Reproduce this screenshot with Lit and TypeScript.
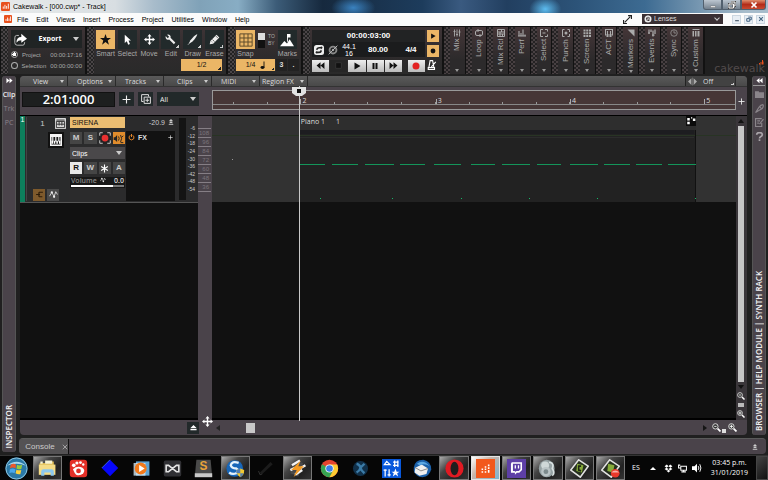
import { LitElement, html, svg, css, nothing } from "lit";
import type { SVGTemplateResult } from "lit";
import { customElement } from "lit/decorators.js";
import { classMap } from "lit/directives/class-map.js";

/* Glyphs are drawn on a 16 x 16 canvas unless stated otherwise. */
const GLYPHS: Record<string, SVGTemplateResult> = {
  brand: svg`<rect width="16" height="16" rx="2" fill="#e8501c"/><path d="M4 12V8M7 12V5M10 12V7M13 12V3" stroke="#fff" stroke-width="1.6"/>`,
  export: svg`<path d="M6 3H3Q1 3 1 6V12Q1 15 4 15H11Q13 15 13 12V11" fill="none" stroke="#bbb" stroke-width="1.2"/><path d="M3 12Q3 5 9 5V1L16 7L9 12V9Q5 9 3 12Z" fill="#fff"/>`,
  star: svg`<path d="M8 0L10 5.800H16L11.200 9.400L13 15.500L8 11.800L3 15.500L4.800 9.400L0 5.800H6Z" fill="#111"/>`,
  cursor: svg`<path d="M4 1V13L7 10.500L9 15.500L11.500 14.500L9.500 9.500H13Z" fill="#fff"/>`,
  move: svg`<path d="M8 0L11 3.500H9V7H12.500V5L16 8L12.500 11V9H9V12.500H11L8 16L5 12.500H7V9H3.500V11L0 8L3.500 5V7H7V3.500H5Z" fill="#fff"/>`,
  wrench: svg`<path d="M1 3L4 6L6 4L3 1Q7 0 8 3Q8.500 4.500 8 5.500L15 12.500L13 15L6 8Q3 9 1.500 7Q.5 5 1 3Z" fill="#eee"/>`,
  draw: svg`<path d="M15 0Q10 2 5 9L2 15L8 11Q14 5 15 0Z" fill="#eee"/><path d="M2 15L1 16" stroke="#eee"/>`,
  erase: svg`<path d="M11 1L15 5L6 14L1 15L2 10Z" fill="#eee"/><path d="M5 8L8 11M4 11L5 12M10 3L13 6" stroke="#333" stroke-width="1"/>`,
  grid: svg`<path d="M1 1H15V15H1ZM1 5.700H15M1 10.300H15M5.700 1V15M10.300 1V15" fill="none" stroke="#5d492a" stroke-width="1.1"/>`,
  quarter: svg`<ellipse cx="7" cy="13" rx="4" ry="2.800" fill="#111"/><path d="M10 13V1" stroke="#111" stroke-width="1.800"/>`,
  marks: svg`<path d="M0 15L5 9L8 12L11 7L16 15ZM8 1H12V5H9V10H8Z" fill="#fff"/>`,
  cycle: svg`<rect x="0" y="0" width="16" height="16" rx="4" fill="#eee"/><path d="M3 7Q4 3 8 3H11V1.500L14 4.500L11 7V5.500H8Q6 5.500 5.500 8M13 9Q12 13 8 13H5V14.500L2 11.500L5 9V10.500H8Q10 10.500 10.500 8" fill="#222"/>`,
  punchoff: svg`<circle cx="8" cy="8" r="5.500" fill="none" stroke="#888" stroke-width="3"/><circle cx="8" cy="8" r="2" fill="#999"/><path d="M1 15L15 1" stroke="#bbb" stroke-width="1.500"/>`,
  rewind: svg`<path d="M8 2V14L1 8ZM15 2V14L8 8Z" fill="#111"/>`,
  stop: svg`<path d="M3 3H13V13H3Z" fill="#111" stroke="#444"/>`,
  play: svg`<path d="M3 1L15 8L3 15Z" fill="#111"/>`,
  pause: svg`<path d="M3 2H7V14H3ZM9 2H13V14H9Z" fill="#111"/>`,
  forward: svg`<path d="M1 2V14L8 8ZM8 2V14L15 8Z" fill="#111"/>`,
  record: svg`<circle cx="8" cy="8" r="7" fill="#e32222"/>`,
  dot: svg`<circle cx="8" cy="8" r="6.500" fill="#111"/>`,
  metronome: svg`<path d="M5 1H9L11 12H3ZM2 12H12V15H2ZM7 11L14 3" fill="none" stroke="#fff" stroke-width="1.800"/>`,
  mix: svg`<path d="M3 1V15M8 1V15M13 1V15M1 5H5M6 11H10M11 6H15" stroke="#aaa" stroke-width="1.800"/>`,
  loop: svg`<path d="M5 3H13Q15 3 15 6V10Q15 13 12 13H4Q1 13 1 10V6Q1 3 5 3M6 0V6M10 10V16" fill="none" stroke="#aaa" stroke-width="2"/>`,
  mixrd: svg`<path d="M1 1H15V15H1ZM1 6H15M1 10H15M9 1V6M6 6V15M11 10V15" fill="none" stroke="#aaa" stroke-width="2"/>`,
  perf: svg`<path d="M2 15V4M6 15V8M10 15V1M14 15V11M0 14H16" stroke="#aaa" stroke-width="2.200"/>`,
  select: svg`<path d="M6 1H1V15H6M10 1H15V5M15 11V15H10M5 8H11" fill="none" stroke="#aaa" stroke-width="2"/>`,
  punch: svg`<path d="M5 1H1V15H5M11 1H15V6M15 10V15H11" fill="none" stroke="#aaa" stroke-width="2"/><circle cx="8" cy="8" r="3" fill="#aaa"/>`,
  screen: svg`<path d="M1 1H5V5H1ZM6.500 1H10.500V5H6.500ZM12 1H16V5H12ZM1 6.500H5V10.500H1ZM6.500 6.500H10.500V10.500H6.500ZM12 6.500H16V10.500H12ZM1 12H5V16H1ZM6.500 12H10.500V16H6.500ZM12 12H16V16H12Z" fill="#aaa"/>`,
  act: svg`<path d="M1 1H15V12H1ZM5 4V15M11 4V15M3 15H7M9 15H13" fill="none" stroke="#aaa" stroke-width="2.200"/>`,
  markers: svg`<path d="M1 1H15V15Z" fill="#aaa"/>`,
  events: svg`<path d="M2 1V9M6 1V6M10 3V15M14 1V10M0 8H4M8 12H13" stroke="#aaa" stroke-width="2.500"/>`,
  sync: svg`<circle cx="8" cy="8" r="6.500" fill="none" stroke="#999" stroke-width="1.600"/><path d="M8 3V8H12" fill="none" stroke="#999" stroke-width="1.500"/>`,
  custom: svg`<path d="M1 4H4V15H1ZM6 4H9V15H6ZM11 4H15V15H11ZM1 0H15V2H1Z" fill="#aaa"/>`,
  expand: svg`<path d="M3 13L13 3M9 1H15V7M1 9V15H7" fill="none" stroke="#222" stroke-width="2"/>`,
  lens: svg`<circle cx="8" cy="8" r="7" fill="#eee"/><path d="M8 3L12 6L10.500 12H5.500L4 6Z" fill="#3a3034"/><path d="M8 8L8 1M8 8L14 8M8 8L4 14" stroke="#eee" stroke-width="1.500"/>`,
  plus: svg`<path d="M8 1V15M1 8H15" stroke="#eee" stroke-width="2"/>`,
  duplicate: svg`<path d="M5 5H15V15H5ZM4 12H1V1H12V4M10 7V13M7 10H13" fill="none" stroke="#ddd" stroke-width="1.600"/>`,
  fastright: svg`<path d="M1 2V14L8 8ZM8 2V14L15 8Z" fill="#fff"/>`,
  fastleft: svg`<path d="M8 2V14L1 8ZM15 2V14L8 8Z" fill="#fff"/>`,
  trackview: svg`<rect width="16" height="16" rx="1" fill="#d8d8d8"/><path d="M2 5H14V14H2ZM2 3H14M6 5V11M10 5V11M2 9H14" fill="none" stroke="#333" stroke-width="1.400"/>`,
  piano: svg`<rect width="16" height="16" fill="#f4f4f4"/><path d="M2 4H14V14H2Z" fill="#1c1c1c"/><path d="M2 9H4V13H2ZM5 9H7V13H5ZM8.500 9H10.500V13H8.500ZM12 9H14V13H12ZM3 4H4.500V10H3ZM7 4H8.500V10H7ZM11 4H12.500V10H11Z" fill="#fff"/>`,
  arm: svg`<path d="M1 5V1H5M11 1H15V5M15 11V15H11M5 15H1V11" fill="none" stroke="#ddd" stroke-width="1.200"/><circle cx="8" cy="8" r="4.500" fill="#e83030"/>`,
  echo: svg`<path d="M1 6H3L6 3V13L3 10H1Z" fill="#222"/><path d="M8 5Q10 8 8 11M11 3Q14 8 11 13M13 6L15 4M11 14L15 14" fill="none" stroke="#222" stroke-width="1.400"/>`,
  asterisk: svg`<path d="M8 1V15M2 4.500L14 11.500M14 4.500L2 11.500" stroke="#fff" stroke-width="2"/>`,
  wave: svg`<path d="M1 11L5 4L9 12L12 3L15 8" fill="none" stroke="#ddd" stroke-width="1.600"/><circle cx="5" cy="4" r="2" fill="#eee"/><circle cx="9" cy="12" r="2" fill="#eee"/>`,
  lanes: svg`<path d="M2 8H9M7 4H14M7 12H13M7 4V12" stroke="#2c1c08" stroke-width="2.200"/>`,
  power: svg`<path d="M5 3Q1 6 3 11Q8 16 13 11Q15 6 11 3M8 0V7" fill="none" stroke="#ec8a2a" stroke-width="2.200"/>`,
  peak: svg`<path d="M8 0L14 6H2ZM8 6L14 11H2ZM2 13H14V15H2Z" fill="#ccc"/>`,
  eject: svg`<path d="M8 2L15 9H1ZM1 11H15V14H1Z" fill="#fff"/>`,
  zoomout: svg`<circle cx="6" cy="6" r="4.800" fill="#333" stroke="#ddd" stroke-width="1.700"/><path d="M10 10L15 15" stroke="#fff" stroke-width="3"/><path d="M4 6H8" stroke="#fff" stroke-width="1.500"/>`,
  zoomin: svg`<circle cx="6" cy="6" r="4.800" fill="#333" stroke="#ddd" stroke-width="1.700"/><path d="M10 10L15 15" stroke="#fff" stroke-width="3"/><path d="M3 6H9M6 3V9" stroke="#fff" stroke-width="1.600"/>`,
  automute: svg`<path d="M6 2V14L0 8ZM10 2V14L16 8Z" fill="#aaa"/><path d="M8 1V15" stroke="#888"/>`,
  folder: svg`<path d="M0 2H7V4H16V14H0Z" fill="#8a858a"/>`,
  plug: svg`<path d="M1 15L7 6Q10 1 14 1Q16 3 13 8L6 12ZM9 5L12 9" fill="none" stroke="#8a858a" stroke-width="2"/>`,
  note: svg`<path d="M12 1H1V15H12V9M4 5H9M4 9H7M8 11L15 2" fill="none" stroke="#8a858a" stroke-width="2"/>`,
  help: svg`<path d="M3 5Q3 1 8 1Q13 1 13 5Q13 7 10 8.500Q8 9.500 8 11.500" fill="none" stroke="#aaa5aa" stroke-width="3"/><path d="M6.500 13H9.500V16H6.500Z" fill="#aaa5aa"/>`,
  clipmenu: svg`<rect width="16" height="16" fill="#0c0c0c"/><path d="M2 3H6V7H2ZM2 9H6V13H2ZM8 2H10V4H8ZM11 4H15V8H11Z" fill="#fff"/>`,
  minimize: svg`<path d="M3 10H13V13H3Z" fill="#fff" stroke="#555" stroke-width=".8"/>`,
  restore: svg`<path d="M6 2H14V10H11M2 6H11V14H2Z" fill="none" stroke="#444" stroke-width="4"/><path d="M6 2H14V10H11M2 6H11V14H2Z" fill="none" stroke="#fff" stroke-width="2"/>`,
  close: svg`<path d="M3 3L13 13M13 3L3 13" stroke="#fff" stroke-width="3.400"/>`,
  docmin: svg`<path d="M3 11H13V14H3Z" fill="#456"/>`,
  docrestore: svg`<path d="M6 3H14V10H11M2 7H10V14H2Z" fill="none" stroke="#36597a" stroke-width="2.500"/>`,
  docclose: svg`<path d="M3 3L13 13M13 3L3 13" stroke="#456580" stroke-width="3"/>`,
  tabclose: svg`<path d="M2 2L14 14M14 2L2 14" stroke="#bbb" stroke-width="2"/>`,
  /* taskbar, 24 x 24 */
  windows: svg`<circle cx="12" cy="12" r="11.500" fill="#2a78a6"/><circle cx="12" cy="12" r="11" fill="none" stroke="#8fc4de" stroke-width="1"/><path d="M2 9Q12 1 22 9Q12 5 2 9Z" fill="#a8d6ea"/><path d="M6 8Q9 6 11.500 8L11 12Q8 10 5 12Z" fill="#f0582a"/><path d="M12.500 8Q15 9.500 18 8L17 12.500Q15 13.500 12 12Z" fill="#9acb3a"/><path d="M5 13Q8 11 11 13L10 17Q7 15.500 4.500 17Z" fill="#48a7ec"/><path d="M12 13Q14 14.500 17 13.500L16 18Q13 18.500 11 17Z" fill="#fbd03a"/>`,
  explorer: svg`<path d="M2 5H9L11 3H20V8H2Z" fill="#d9b54c"/><path d="M1 7H22V20H1Z" fill="#f5dc86"/><path d="M3 3H6V6H3ZM9 2H18V6H9Z" fill="#f7f3d4"/><path d="M4 16Q4 13 7 13H17Q20 13 20 16V21H16V17H8V21H4Z" fill="#8cc8ee"/>`,
  gom: svg`<rect x="1" y="1" width="22" height="22" rx="4" fill="#e53028"/><path d="M5 13Q10 8 17 11Q21 14 18 18Q14 22 9 20Q7 18 5 13Z" fill="#fff"/><circle cx="6" cy="8" r="2.300" fill="#fff"/><circle cx="10" cy="5" r="2" fill="#fff"/><circle cx="14.500" cy="4.500" r="1.800" fill="#fff"/><circle cx="18" cy="7" r="1.500" fill="#fff"/><circle cx="12" cy="15" r="3" fill="#e53028"/>`,
  diamond: svg`<path d="M12 1L23 12L12 23L1 12Z" fill="#0606fa"/><path d="M1 12L12 1" stroke="#4878f8" stroke-width="1"/>`,
  media: svg`<path d="M5 3H22V21H5Z" fill="#5ea4d4"/><path d="M2 5H17V21H2Z" fill="#d4e9f4" opacity=".8"/><circle cx="11" cy="12" r="7.500" fill="#f27a1c"/><path d="M9 7.500L16 12L9 16.500Z" fill="#fff"/>`,
  infinity: svg`<rect x="1" y="2" width="22" height="20" rx="2" fill="#303034"/><path d="M4 8H7L17 16H20V8H17L7 16H4Z" fill="none" stroke="#e4e4e4" stroke-width="2"/>`,
  sublime: svg`<path d="M3 1H21L23 22H1Z" fill="#4a4a4a"/><path d="M1 18H23V23H1Z" fill="#c9c9c9"/><text x="12" y="14" font-size="15" font-weight="700" text-anchor="middle" fill="#e9a23a" font-family="Liberation Sans, sans-serif">S</text>`,
  orb: svg`<circle cx="11" cy="12" r="10.500" fill="#1766b8"/><path d="M16 5Q7 2 6 8Q7 12 13 12Q17 14 13 18Q8 20 4 17" fill="none" stroke="#e6f2fb" stroke-width="3"/><path d="M13 14L18 12L23 14Q23 21 18 23Q13 20 13 14Z" fill="#f2c832"/><path d="M18 12V18H13V14ZM18 18H22Q21 22 18 23Z" fill="#2a6ad0" opacity=".8"/>`,
  pen: svg`<path d="M3 19L18 4L21 7L7 20Z" fill="#1c1c1c"/><path d="M2 16L4 21L7 20" fill="none" stroke="#3c3c3c"/>`,
  winamp: svg`<path d="M9 2L19 5L13 22L3 18Z" fill="#4a4a4a"/><path d="M5 8L15 2M3 14L9 11M15 12L22 8M9 20L18 14" stroke="#f3f3f3" stroke-width="3"/><path d="M16 2L4 14H11L7 23L20 9H13Z" fill="#f39a22"/>`,
  chrome: svg`<circle cx="12" cy="12" r="11" fill="#e4432f"/><path d="M12 12L2.500 6.500Q-1 14 4 19.500Q8 23 12 23L17 14Z" fill="#36a452"/><path d="M12 7H21.800Q25 16 18 21Q15 23 12 23L17 14Z" fill="#fccc32"/><circle cx="12" cy="12" r="5.200" fill="#fff"/><circle cx="12" cy="12" r="4.200" fill="#3b7de8"/>`,
  xbmc: svg`<circle cx="12" cy="12" r="9.500" fill="#10304a"/><path d="M7 6Q11 7 12 11Q13 15 17 18M17 6L12 11Q11 15 7 17" fill="none" stroke="#3c7ca8" stroke-width="3"/>`,
  tools: svg`<rect width="24" height="24" fill="#0858dc"/><path d="M3 7H10L6 3ZM14 4H21M14 8H21M16 2V10M20 2V10M4 13V22M9 13V22M2 14H6M7 20H11" stroke="#fff" stroke-width="1.600" fill="none"/><path d="M17 12L18.500 16H22L19.200 18L20.300 22L17 19.500L13.700 22L14.800 18L12 16H15.500Z" fill="#fff"/>`,
  mail: svg`<path d="M1 11Q2 1 13 1Q23 3 23 13Q21 22 12 23Q3 22 1 15Z" fill="#1c61aa"/><path d="M3 11L11 7L19 12L17 19L8 21L2 17Z" fill="#f0f0f0"/><path d="M3 11L10 15L19 12" fill="none" stroke="#888" stroke-width="1.200"/><path d="M5 6Q13 0 21 9Q15 5 8 8Z" fill="#5ba7e2"/>`,
  opera: svg`<ellipse cx="12" cy="12" rx="11.500" ry="11.500" fill="#e01a22"/><ellipse cx="12" cy="12" rx="5" ry="8.500" fill="#1e1e1e"/>`,
  cakewalk: svg`<rect width="24" height="24" fill="#f2581c"/><path d="M7 12H9V14H7ZM7 15.500H9V17.500H7ZM11 9H13V11H11ZM11 12H13V14H11ZM11 15.500H13V17.500H11ZM15 7H17V9H15ZM15 10.500H17V12.500H15ZM15 14H17V17.500H15Z" fill="#fff"/>`,
  twitch: svg`<rect width="24" height="24" fill="#5d3fa6"/><path d="M6 4H19V14L15.500 17.500H12.500L10 20V17.500H5V6Z" fill="#fff"/><path d="M7.500 6H17V13L15 15H12L10 16.500V15H7.500Z" fill="#5d3fa6"/><path d="M10.500 8V12M14.500 8V12" stroke="#fff" stroke-width="1.600"/>`,
  speakerpc: svg`<ellipse cx="11" cy="12" rx="10" ry="11" fill="#96a2a4"/><circle cx="9" cy="8" r="5" fill="#cfd8d8"/><circle cx="10" cy="16" r="6" fill="#bac4c6"/><circle cx="10" cy="16" r="3" fill="#7c8a8c"/><path d="M14 4Q21 5 18 12Q22 18 18 21" fill="none" stroke="#d9e2e2" stroke-width="2"/>`,
  camtasia: svg`<path d="M11 1L23 9L13 23L1 14Z" fill="#26301e" stroke="#e2e2e2" stroke-width="2"/><path d="M9 6L17 8L15 17L8 15Z" fill="#86ab3a"/><path d="M14 9L11 9V14L14 15" fill="none" stroke="#1e2616" stroke-width="2"/>`,
  recorder: svg`<path d="M11 1L23 9L13 23L1 14Z" fill="#26301e" stroke="#e2e2e2" stroke-width="2"/><path d="M9 6L17 8L15 17L8 15Z" fill="#86ab3a"/><circle cx="18" cy="18" r="5.500" fill="#e8382a"/><path d="M13 17Q18 12 23 17Z" fill="#f6b0a6"/>`,
  dropbox: svg`<path d="M5 1L8 4L4.500 6.500L1 4ZM11 1L15 4L11.500 6.500L8 4ZM1 9L4.500 6.500L8 9L5 11.500ZM15 9L11.500 6.500L8 9L11 11.500ZM8 10L11 12.500L8 15L5 12.500Z" fill="#fff"/>`,
  network: svg`<path d="M5 4H15V11H5ZM10 11V14M6 14H14M1 1V7H4M1 2H4" fill="none" stroke="#fff" stroke-width="1.800"/>`,
  sound: svg`<path d="M0 5H4L8 1V15L4 11H0Z" fill="#fff"/><path d="M10 5Q12 8 10 11M12.500 2Q16 8 12.500 14" fill="none" stroke="#fff" stroke-width="1.500"/>`,
  playhead: svg`<path d="M0 1H14V7L10 10H4L0 7Z" fill="#e2e2e2"/><path d="M5 3H9V7H5Z" fill="#111"/>`,
};

const glyph = (name: string, size: number, box = 16) =>
  html`<svg class="glyph" width=${size} height=${size} viewBox="0 0 ${box} ${box}" aria-hidden="true">${GLYPHS[name]}</svg>`;

const MENU = ["File", "Edit", "Views", "Insert", "Process", "Project", "Utilities", "Window", "Help"];

const TOOLS = [
  { id: "star", label: "Smart", active: true, more: false },
  { id: "cursor", label: "Select", active: false, more: false },
  { id: "move", label: "Move", active: false, more: false },
  { id: "wrench", label: "Edit", active: false, more: true },
  { id: "draw", label: "Draw", active: false, more: true },
  { id: "erase", label: "Erase", active: false, more: true },
];

const MODULES = [
  ["mix", "Mix"], ["loop", "Loop"], ["mixrd", "Mix Rcl"], ["perf", "Perf"],
  ["select", "Select"], ["punch", "Punch"], ["screen", "Screen"], ["act", "ACT"],
  ["markers", "Markers"], ["events", "Events"], ["sync", "Sync"], ["custom", "Custom"],
];

/* Timeline positions, in units of the visible span. */
const SPAN = 525;
const NOTES = [
  [88, 25], [120, 26], [153, 29], [188, 25], [222, 27], [259, 25],
  [291, 28], [326, 24], [359, 28], [393, 26], [425, 26], [457, 28],
];
const HITS = [108, 180, 249, 318, 386, 484];
const BARS = [[88, "2"], [224, "3"], [359, "4"], [494, "5"]] as const;
const BEATS = Array.from({ length: 15 }, (_, i) => 20 + (i * 406) / 12);

const TASKS = [
  ["explorer", "open"], ["gom", ""], ["diamond", ""], ["media", ""], ["infinity", ""],
  ["sublime", ""], ["orb", "open"], ["pen", ""], ["winamp", "open"], ["chrome", ""],
  ["xbmc", ""], ["tools", ""], ["mail", ""], ["opera", "open"], ["cakewalk", "current"],
  ["twitch", "open"], ["speakerpc", "open"], ["camtasia", "open"], ["recorder", "open"],
];

const base = css`
  * { box-sizing: border-box; }
  button, input, select {
    font: inherit; color: inherit; background: none; border: 0; border-radius: 0;
    margin: 0; padding: 0; min-width: 0; appearance: none; outline: none;
  }
  button { display: flex; align-items: center; justify-content: center; white-space: nowrap; }
  .glyph { display: block; flex: none; }
  .down { width: 0; height: 0; flex: none; border: 3px solid transparent; border-top: 4px solid #ccc; border-bottom: 0; }
  .down.small { border-width: 3px 2px 0; }
  .corner { position: absolute; right: 1px; bottom: 1px; width: 3px; height: 3px; background: linear-gradient(135deg, transparent 50%, #ccc 50%); }
`;

@customElement("window-chrome")
class WindowChrome extends LitElement {
  static styles = [base, css`
    :host { display: block; font: 7px/13px "Liberation Sans", Arial, sans-serif; color: #000; }
    .title {
      display: flex; align-items: center; height: 13px; padding-left: 1px; gap: 3px;
      background:
        radial-gradient(ellipse 22px 12px at 46% 60%, #3a82c0, transparent),
        radial-gradient(ellipse 16px 12px at 71% 70%, #5cbcf0, transparent),
        linear-gradient(90deg, #e8eaea 0, #d8dee2 15%, #a8bccb 20%, #80a2b8 26%, #88adc4 31%, #3c5c78 36%, #16293e 42%, #1d3c5c 55%, #3a5a80 60%, #223f60 66%, #2c5378 75%, #3d6b92 84%, #a7bccb 97%);
    }
    .name { flex: 1; text-shadow: 0 0 3px #fff; }
    .caption { display: flex; align-self: flex-start; margin-right: 2px; }
    .caption button { width: 19px; height: 10px; border: 1px solid #52606e; border-top: 0; background: linear-gradient(#bcc6d0, #74818e); }
    .caption button:first-child { border-bottom-left-radius: 3px; }
    .caption .x { width: 25px; background: linear-gradient(#e0906e, #b32c18 50%, #c84a30); border-bottom-right-radius: 3px; }
    .menu { display: flex; align-items: center; height: 13px; padding: 0 3px 1px 4px; background: #fbfbfb; }
    .items { display: flex; flex: 1; gap: 8px; padding-left: 5px; }
    .lenses { display: flex; align-items: center; width: 81px; height: 10px; margin: 0 9px 0 10px; background: #3a3034; color: #ddd; padding: 0 2px; gap: 2px; }
    .lenses select { flex: 1; line-height: 10px; height: 10px; }
    .doc { display: flex; gap: 3px; }
    .doc button { width: 9px; height: 9px; background: #e8eef4; border: 1px solid #cbd6e0; }
    .tick { width: 4px; height: 4px; border: solid #ccc; border-width: 0 1px 1px 0; transform: rotate(45deg); margin: 0 2px 2px 0; }
  `];
  render() {
    return html`
      <header class="title">
        ${glyph("brand", 9)}
        <span class="name">Cakewalk - [000.cwp* - Track]</span>
        <span class="caption">
          <button aria-label="Minimize">${glyph("minimize", 8)}</button>
          <button aria-label="Restore">${glyph("restore", 8)}</button>
          <button class="x" aria-label="Close">${glyph("close", 8)}</button>
        </span>
      </header>
      <nav class="menu">
        ${glyph("brand", 8)}
        <span class="items">${MENU.map((m) => html`<button>${m}</button>`)}</span>
        ${glyph("expand", 9)}
        <label class="lenses">${glyph("lens", 8)}
          <select aria-label="Lenses"><option>Lenses</option></select><i class="tick"></i>
        </label>
        <span class="doc">
          <button aria-label="Minimize document">${glyph("docmin", 6)}</button>
          <button aria-label="Restore document">${glyph("docrestore", 6)}</button>
          <button aria-label="Close document">${glyph("docclose", 6)}</button>
        </span>
      </nav>`;
  }
}

@customElement("control-bar")
class ControlBar extends LitElement {
  static styles = [base, css`
    :host { display: flex; gap: 2px; height: 48px; padding: 1px 0 0 1px; background: #121212; color: #aaa; font: 7px/8px "Liberation Sans", Arial, sans-serif; }
    .module { position: relative; flex: none; display: flex; background: linear-gradient(#3e3436, #2e2b2c 60%, #2a2a2a); }
    .grip { width: 7px; flex: none; background: conic-gradient(#4a4547 25%, #222 0 50%, #4a4547 0 75%, #222 0) 0 0 / 4px 4px; }
    .export { width: 84px; }
    .body { flex: 1; min-width: 0; padding: 3px; }
    .exportbtn { width: 100%; height: 18px; background: #202424; color: #fff; font: bold 7px/18px "Open Sans", sans-serif; justify-content: space-between; padding: 0 3px; }
    .choice { display: flex; align-items: center; height: 9px; margin-top: 2px; gap: 4px; font-size: 6px; }
    .choice input { width: 7px; height: 7px; border: 1px solid #aaa; border-radius: 50%; }
    .choice input:checked { background: radial-gradient(#fff 2px, transparent 2px); }
    .choice span { flex: 1; }
    .tools { width: 139px; }
    .tools .body { padding: 3px 2px; }
    .row { display: flex; justify-content: space-between; }
    .tool { display: flex; flex-direction: column; align-items: center; width: 19px; }
    .tool i { position: relative; display: flex; align-items: center; justify-content: center; width: 19px; height: 19px; background: #222a2b; margin-bottom: 1px; }
    .tool.active i, .gold { background: #ebb666; color: #111; }
    .gold { position: relative; display: flex; align-items: center; justify-content: center; height: 12px; }
    .gold select { flex: 1; height: 100%; text-align: center; text-align-last: center; }
    .gold .corner { background: linear-gradient(135deg, transparent 50%, #222 50%); }
    .res { width: 41px; margin: 1px 2px 0 auto; }
    .snap { width: 73px; }
    .snap .body { padding: 3px 1px; }
    .switch { display: flex; gap: 3px; font-size: 5px; line-height: 7px; padding-top: 3px; }
    .switch i { width: 7px; height: 15px; background: linear-gradient(#ddd 45%, #111 45%); }
    .snap .row { justify-content: flex-start; gap: 3px; }
    .snap .row.second { gap: 1px; margin-top: 1px; }
    .value { width: 39px; padding: 0 8px 0 6px; }
    .mini { width: 11px; height: 12px; background: #222; color: #ddd; font-weight: bold; }
    .transport { width: 139px; color: #fff; }
    .transport .body { display: grid; grid-template-columns: 1fr 12px; gap: 2px; padding: 3px 3px 2px 2px; }
    .lcd { background: #1b1c1d; font: bold 8px/12px "Liberation Sans", sans-serif; height: 27px; }
    .lcd .time { text-align: center; height: 12px; background: #222324; margin-bottom: 1px; }
    .lcd .info { display: grid; grid-template-columns: 14px 13px 20px 38px 1fr; align-items: center; height: 14px; }
    .info > * { justify-self: center; }
    .rate { font-size: 7px; line-height: 7px; text-align: center; font-weight: normal; }
    .side { display: flex; flex-direction: column; gap: 3px; }
    .side .gold { width: 12px; height: 12px; }
    .keys { display: flex; gap: 1px; }
    .keys button { position: relative; flex: 1; height: 12px; background: linear-gradient(#eee, #bbb); }
    .keys .off { background: #262626; }
    .keys .rec { margin-left: 5px; }
    .strips { flex: 1 1 258px; max-width: 259px; display: flex; gap: 1px; }
    .strip { flex: 1; height: auto; position: relative; flex-direction: column; justify-content: flex-start; align-items: center; padding: 2px 0 2px 6px; gap: 2px; color: #aaa; font-size: 8px; line-height: 10px;
      background: conic-gradient(#484042 25%, #242223 0 50%, #484042 0 75%, #242223 0) 0 0 / 4px 4px; }
    .strip::before { content: ""; position: absolute; inset: 0 0 0 6px; background: linear-gradient(#453638, #2c2a2b 70%); }
    .strip > * { position: relative; }
    .strip span { writing-mode: vertical-rl; transform: rotate(180deg); flex: 1; text-align: right; }
    .strip .down { border-top-color: #999; }
    .brand { flex: 1 0 60px; display: flex; align-items: flex-end; justify-content: flex-end; padding: 0 3px 0 0; background: #202020; color: #514a4b; font: 11px/10px "DejaVu Sans", sans-serif; position: relative; }
    .brand svg { position: absolute; right: 4px; bottom: 9px; }
  `];
  render() {
    return html`
      <section class="module export"><i class="grip"></i><div class="body">
        <button class="exportbtn">${glyph("export", 13)}<span>Export</span><i class="down"></i></button>
        <label class="choice"><input type="radio" name="range" checked><span>Project</span><time>00:00:17:16</time></label>
        <label class="choice"><input type="radio" name="range"><span>Selection</span><time>00:00:00:00</time></label>
      </div></section>

      <section class="module tools"><i class="grip"></i><div class="body">
        <div class="row">${TOOLS.map((t) => html`
          <button class=${classMap({ tool: true, active: t.active })}>
            <i>${glyph(t.id, 11)}${t.more ? html`<b class="corner"></b>` : nothing}</i>${t.label}
          </button>`)}</div>
        <div class="gold res"><select aria-label="Draw resolution"><option>1/2</option></select><b class="corner"></b></div>
      </div></section>

      <section class="module snap"><i class="grip"></i><div class="body">
        <div class="row">
          <button class="tool active"><i>${glyph("grid", 14)}</i>Snap</button>
          <span class="switch"><i></i><span>TO<br>BY</span></span>
          <button class="tool"><i>${glyph("marks", 14)}</i>Marks</button>
        </div>
        <div class="row second">
          <div class="gold value"><select aria-label="Snap value"><option>1/4</option></select>${glyph("quarter", 8)}<b class="corner"></b></div>
          <button class="mini">3</button><button class="mini">.</button>
        </div>
      </div></section>

      <section class="module transport"><i class="grip"></i><div class="body">
        <div class="lcd">
          <div class="time">00:00:03:00</div>
          <div class="info">${glyph("cycle", 10)}${glyph("punchoff", 10)}<span class="rate">44.1<br>16</span><span>80.00</span><span>4/4</span></div>
        </div>
        <div class="side">
          <button class="gold" aria-label="Auto play">${glyph("play", 6)}</button>
          <button class="gold" aria-label="Auto record">${glyph("dot", 6)}</button>
        </div>
        <div class="keys">
          <button aria-label="Rewind">${glyph("rewind", 9)}</button>
          <button class="off" aria-label="Stop">${glyph("stop", 9)}</button>
          <button aria-label="Play">${glyph("play", 8)}</button>
          <button aria-label="Pause">${glyph("pause", 8)}</button>
          <button aria-label="Forward">${glyph("forward", 9)}</button>
          <button class="rec" aria-label="Record">${glyph("record", 8)}</button>
        </div>
        ${glyph("metronome", 10)}
      </div></section>

      <div class="strips">${MODULES.map(([id, label]) => html`
        <button class="strip">${glyph(id, 8)}<span>${label}</span><i class="down small"></i></button>`)}
      </div>
      <div class="brand">cakewalk
        <svg width="5" height="5" viewBox="0 0 10 10" aria-hidden="true"><path d="M0 9V6H2V9ZM3 9V4H5V9ZM6 9V0H8V9ZM9 9V3H10V9Z" fill="#e8501c"/></svg>
      </div>`;
  }
}

@customElement("track-pane")
class TrackPane extends LitElement {
  static styles = [base, css`
    :host { display: grid; grid-template-columns: 5px 43px 55px 49px 10px 1fr; column-gap: 1px; height: 87px; padding: 1px 0; background: #2b2b2c; color: #ccc; border-bottom: 1px solid #555; font: 7px/9px "Liberation Sans", Arial, sans-serif; }
    .color { background: #0d7f5c; margin: -1px 0; text-align: center; color: #fff; line-height: 8px; }
    .id { display: grid; grid-template: 13px 1fr 13px / 1fr 17px; align-items: center; justify-items: center; padding: 0 0 0 6px; border-left: 1px solid #444; background: #2a2b2c; }
    .id .big { align-self: start; grid-column: 2; background: #111; padding: 2px; margin: 2px 0 0 -9px; }
    .num { font-size: 8px; }
    .foot { grid-column: 1 / 3; justify-self: start; display: flex; gap: 2px; }
    .foot button { width: 12px; height: 12px; background: #4a4a4a; }
    .foot .brown { background: #7e5a2c; }
    .controls { display: flex; flex-direction: column; gap: 3px; }
    .name { height: 11px; width: 100%; background: #ebbd72; color: #111; padding: 0 2px; margin-bottom: 1px; }
    .four { display: grid; grid-template-columns: repeat(4, 1fr); gap: 2px; }
    .four button { height: 12px; background: #454545; font: bold 8px/12px "Liberation Sans", sans-serif; }
    .four .rec { background: #222; }
    .four .echo { background: #e08c2c; }
    .four .on { background: #e8e8e8; color: #111; }
    .combo { display: flex; align-items: center; height: 12px; background: #4a484a; padding: 0 3px 0 2px; color: #fff; font-size: 7px; }
    .combo select { flex: 1; height: 12px; }
    .volume { display: grid; grid-template-columns: 1fr auto; font: 600 7px/7px "Open Sans", sans-serif; color: #888; height: 11px; background: #181818; padding: 0 1px; }
    .volume .caption { display: flex; gap: 3px; }
    .volume b { color: #ddd; font-weight: 600; }
    .volume input { grid-column: 1 / 3; height: 2px; width: 100%; background: linear-gradient(90deg, #fff 80%, #777 80%); }
    .volume input::-webkit-slider-thumb { appearance: none; width: 0; }
    .fx { display: flex; flex-direction: column; }
    .peak { display: flex; align-items: center; justify-content: flex-end; gap: 3px; height: 14px; padding: 0 1px 4px 0; }
    .bin { flex: 1; background: #121212; padding: 2px; }
    .bin div { display: flex; align-items: center; gap: 3px; font-weight: bold; color: #ddd; height: 8px; }
    .bin .add { margin-left: auto; }
    .meter { background: #141414; margin: 1px 0 1px 3px; }
    .scale { display: flex; flex-direction: column; justify-content: space-between; text-align: right; font-size: 5px; line-height: 7px; color: #ccc; padding: 8px 3px 8px 0; }
  `];
  render() {
    return html`
      <span class="color">1</span>
      <div class="id">
        <span class="num">1</span>${glyph("trackview", 11)}
        <span class="big">${glyph("piano", 12)}</span>
        <div class="foot"><button class="brown" aria-label="Lanes">${glyph("lanes", 9)}</button><button aria-label="Automation">${glyph("wave", 9)}</button></div>
      </div>
      <div class="controls">
        <input class="name" aria-label="Track name" value="SIRENA">
        <div class="four">
          <button>M</button><button>S</button>
          <button class="rec" aria-label="Arm">${glyph("arm", 12)}</button>
          <button class="echo" aria-label="Input echo">${glyph("echo", 11)}</button>
        </div>
        <div class="combo"><select aria-label="Edit filter"><option>Clips</option></select><i class="down"></i></div>
        <div class="four">
          <button class="on">R</button><button>W</button>
          <button aria-label="Freeze">${glyph("asterisk", 9)}</button><button>A</button>
        </div>
        <label class="volume">
          <span class="caption">Volume ${glyph("wave", 6)}</span><b>0.0</b>
          <input type="range" aria-label="Volume" value="80">
        </label>
      </div>
      <div class="fx">
        <div class="peak">-20.9 ${glyph("peak", 6)}</div>
        <div class="bin"><div>${glyph("power", 7)}FX<span class="add">${glyph("plus", 5)}</span></div></div>
      </div>
      <span class="meter"></span>
      <div class="scale">${[-6, -12, -18, -24, -30, -36, -42, -48, -54].map((d) => html`<span>${d}</span>`)}</div>`;
  }
}

@customElement("clip-lane")
class ClipLane extends LitElement {
  static styles = [base, css`
    :host { display: block; position: relative; height: 86px; background: #323232; color: #ddd; font: 7px/11px "Open Sans", sans-serif; }
    .lane { display: block; width: 100%; height: 100%; }
    .head { position: absolute; top: 0; display: flex; gap: 11px; align-items: flex-start; }
    .head .glyph { margin-left: auto; }
  `];
  render() {
    const pct = (v: number) => `${(v / SPAN) * 100}%`;
    return html`
      <svg class="lane" viewBox="0 0 ${SPAN} 86" preserveAspectRatio="none" shape-rendering="crispEdges" aria-hidden="true">
        <rect x="88" y="0" width="397" height="86" fill="#222"/>
        <rect x="88" y="0" width="397" height="14" fill="#2e2e2e"/>
        <rect x="88" y="14" width="395" height="4" fill="#1d1d20"/>
        <rect x="88" y="21" width="395" height="1" fill="#2c2c2c"/>
        <rect x="0" y="19" width="525" height="1" fill="#283424"/>
        <rect x="484" y="14" width="1" height="72" fill="#111"/>
        ${NOTES.map(([x, w]) => svg`<rect x=${x} y="48" width=${w} height="1" fill="#14955a"/>`)}
        ${HITS.map((x) => svg`<rect x=${x} y="82" width="1" height="1" fill="#16b868"/>`)}
        <rect x="20" y="43" width="1" height="1" fill="#999"/>
      </svg>
      <div class="head" style="left:${pct(89)};width:${pct(396)}"><span>Piano 1</span><span>1</span>${glyph("clipmenu", 10)}</div>`;
  }
}

@customElement("track-view")
class TrackView extends LitElement {
  static styles = [base, css`
    :host { display: grid; grid-template: 12px 27px 1fr 15px / 178px 14px 1fr 11px; flex: 1; min-width: 0; position: relative; background: #4a434a; border-radius: 4px; overflow: hidden; font: 7px/11px "Open Sans", sans-serif; color: #ddd; }
    .menus { grid-area: 1 / 1 / 2 / 5; display: flex; height: 11px; background: linear-gradient(#5a5a5a, #494949); border-bottom: 1px solid #333; }
    .menus button { width: 48px; height: 10px; justify-content: space-between; padding: 0 3px 0 13px; border-right: 1px solid #2a2a2a; }
    .menus .tight { padding-left: 9px; }
    .menus .flush { padding-left: 2px; }
    .menus .automute { margin-left: auto; margin-right: 11px; width: 51px; background: #424242; border-left: 1px solid #222; justify-content: flex-start; gap: 6px; padding-left: 2px; position: relative; }
    .now { grid-area: 2 / 1 / 3 / 3; display: flex; align-items: center; gap: 4px; padding: 0 0 5px 2px; }
    .clock { width: 93px; height: 15px; background: #1d1f1f; border: 1px solid #111; color: #fff; text-align: center; font: 600 13px/13px "Open Sans", sans-serif; }
    .sq { width: 15px; height: 14px; background: #22292a; }
    .filter { display: flex; align-items: center; width: 42px; height: 14px; background: #22292a; padding: 0 3px; color: #eee; }
    .filter select { flex: 1; }
    .ruler { grid-area: 2 / 3 / 3 / 4; position: relative; height: 20px; margin-top: 2px; background: #463636; border: 1px solid #999; }
    .ruler svg { display: block; width: 100%; height: 18px; }
    .bar { position: absolute; top: 6px; line-height: 8px; padding-left: 2px; color: #ddd; }
    .addbar { grid-area: 2 / 4 / 3 / 5; align-self: center; width: 11px; height: 11px; }
    .pane { grid-area: 3 / 1 / 4 / 2; background: #111; border-top: 1px solid #000; border-bottom: 2px solid #000; }
    .keys { grid-area: 3 / 2 / 4 / 3; background: #4a434a; border-top: 1px solid #000; padding-top: 12px; font: 6px/8px "Liberation Sans", sans-serif; color: #7b747b; }
    .keys span { display: block; height: 9px; border-top: 1px solid #857e85; padding-right: 2px; text-align: right; width: 13px; }
    .clips { grid-area: 3 / 3 / 4 / 4; background: #111; border-top: 1px solid #000; border-bottom: 2px solid #000; }
    .vscroll { grid-area: 3 / 4 / 4 / 5; display: flex; flex-direction: column; align-items: center; padding: 3px 1px 2px 0; gap: 3px; background: #3a363a; border-top: 1px solid #000; }
    .vscroll .up { border: 3px solid transparent; border-bottom: 4px solid #111; border-top: 0; }
    .vscroll .thumb { width: 6px; flex: 1; background: #c6c6c6; }
    .vscroll .down { border-top-color: #111; }
    .vscroll .block { width: 6px; height: 4px; background: #bbb; }
    .hscroll { grid-area: 4 / 1 / 5 / 5; display: flex; align-items: center; padding: 0 10px 0 167px; gap: 0; }
    .hscroll .eject { width: 12px; height: 12px; background: #22292a; margin-right: 17px; }
    .hscroll .l { border: 3px solid transparent; border-right: 4px solid #222; border-left: 0; }
    .hscroll .thumb { width: 9px; height: 10px; background: #c8c8c8; margin-left: 26px; }
    .hscroll .r { border: 3px solid transparent; border-left: 4px solid #151515; border-right: 0; margin: 0 5px 0 auto; }
    .hscroll .knob { width: 4px; height: 4px; background: #ddd; margin: 6px 2px 0 1px; }
    .overlay { grid-area: 1 / 3 / 5 / 4; position: relative; pointer-events: none; }
    .playhead { position: absolute; top: 10px; bottom: 14px; width: 1px; background: #c8c8c8; }
    .playhead svg { position: absolute; left: -7px; top: 0; }
    .pointer { position: absolute; left: -10px; bottom: 8px; }
  `];
  render() {
    const pct = (v: number) => `${(v / SPAN) * 100}%`;
    const caret = html`<i class="down small"></i>`;
    return html`
      <nav class="menus">
        <button>View${caret}</button><button class="tight">Options${caret}</button>
        <button class="tight">Tracks${caret}</button><button>Clips${caret}</button>
        <button class="tight">MIDI${caret}</button><button class="flush">Region FX${caret}</button>
        <button class="automute">${glyph("automute", 9)}Off<b class="corner"></b></button>
      </nav>
      <div class="now">
        <output class="clock">2:01:000</output>
        <button class="sq" aria-label="Add track">${glyph("plus", 9)}</button>
        <button class="sq" aria-label="Duplicate">${glyph("duplicate", 10)}</button>
        <label class="filter"><select aria-label="Track filter"><option>All</option></select><i class="down"></i></label>
      </div>
      <div class="ruler">
        <svg viewBox="0 0 ${SPAN} 18" preserveAspectRatio="none" shape-rendering="crispEdges" aria-hidden="true">
          <path d="M0 13.500H525" stroke="#888"/>
          ${BEATS.map((x) => svg`<rect x=${Math.round(x)} y="11" width="1" height="2" fill="#999"/>`)}
          ${BARS.map(([x]) => svg`<rect x=${x} y="8" width="1" height="5" fill="#aaa"/>`)}
        </svg>
        ${BARS.map(([x, n]) => html`<span class="bar" style="left:${pct(x)}">${n}</span>`)}
      </div>
      <button class="addbar" aria-label="Add marker">${glyph("plus", 7)}</button>
      <div class="pane"><track-pane></track-pane></div>
      <div class="keys">${[108, 96, 84, 72, 60, 48, 36].map((k) => html`<span>${k}</span>`)}<span></span></div>
      <div class="clips"><clip-lane></clip-lane></div>
      <div class="vscroll">
        <i class="up"></i><i class="thumb"></i><i class="down"></i>
        ${glyph("zoomout", 8)}<i class="block"></i>${glyph("zoomin", 8)}
      </div>
      <div class="hscroll">
        <button class="eject" aria-label="Show buses">${glyph("eject", 7)}</button>
        <i class="l"></i><i class="thumb"></i><i class="r"></i>
        ${glyph("zoomout", 9)}<i class="knob"></i>${glyph("zoomin", 9)}
      </div>
      <div class="overlay">
        <div class="playhead" style="left:${pct(87)}">
          <svg width="14" height="10" viewBox="0 0 14 10" aria-hidden="true">${GLYPHS.playhead}</svg>
        </div>
        <svg class="pointer" width="11" height="11" viewBox="0 0 16 16" aria-hidden="true">${GLYPHS.move}</svg>
      </div>`;
  }
}

@customElement("task-bar")
class TaskBar extends LitElement {
  static styles = [base, css`
    :host { display: flex; align-items: stretch; height: 25px; background: #060606; border-top: 1px solid #333; color: #fff; font: 7px/10px "Open Sans", sans-serif; }
    .start { width: 32px; }
    .tasks { flex: 0 1 594px; display: flex; min-width: 0; }
    .task { flex: 1; margin: 0 1px; border: 1px solid transparent; }
    .open { background: linear-gradient(135deg, #aaa 0, #444 35%, #222 70%, #333); border-color: #777; }
    .current { background: linear-gradient(135deg, #fff, #c8b4a8 40%, #7cb4d4); border-color: #e4e4e4; }
    .tray { flex: 1; display: flex; align-items: center; justify-content: flex-end; gap: 5px; padding-left: 6px; }
    .lang { margin-right: auto; }
    .up { border: 3px solid transparent; border-bottom: 3px solid #fff; border-top: 0; margin-right: 3px; }
    .clock { text-align: center; margin: 0 3px 0 4px; }
    .desk { width: 12px; align-self: stretch; background: linear-gradient(135deg, #444, #111); border: 1px solid #444; }
  `];
  render() {
    return html`
      <button class="start" aria-label="Start">${glyph("windows", 23, 24)}</button>
      <div class="tasks">${TASKS.map(([id, state]) => html`
        <button class="task ${state}" aria-label=${id}>${glyph(id, id === "pen" || id === "diamond" ? 18 : 19, 24)}</button>`)}</div>
      <div class="tray">
        <span class="lang">ES</span><i class="up"></i>
        ${glyph("dropbox", 9)}${glyph("network", 9)}${glyph("sound", 10)}
        <time class="clock">03:45 p.m.<br>31/01/2019</time>
        <button class="desk" aria-label="Show desktop"></button>
      </div>`;
  }
}

@customElement("app-root")
class AppRoot extends LitElement {
  static styles = [base, css`
    :host { display: flex; flex-direction: column; height: 100vh; background: #202020; overflow: hidden; }
    .work { flex: 1; display: flex; gap: 4px; min-height: 0; padding: 2px 2px 3px; }
    .dock { width: 14px; flex: none; display: flex; flex-direction: column; align-items: center; background: #4a434a; border-radius: 3px; color: #8a838a; font: 7px/14px "Open Sans", sans-serif; border: 1px solid #555; border-width: 0 1px; }
    .dock .side { writing-mode: vertical-rl; transform: rotate(180deg); color: #f0f0f0; font: 600 8px/12px "Open Sans", sans-serif; margin-top: auto; white-space: nowrap; padding-top: 4px; }
    .left { margin-bottom: -17px; }
    .right { margin-left: 1px; }
    .dock .top { height: 10px; width: 100%; border-bottom: 1px solid #999; margin-bottom: 2px; }
    .left .top { border-bottom-color: transparent; }
    .dock .sel { color: #eee; font-weight: 600; }
    .icons { display: flex; flex-direction: column; gap: 5px; padding-top: 2px; }
    .console { display: flex; align-items: center; height: 16px; margin: 0 2px 1px 19px; background: #4a434a; border-radius: 4px; border-top: 1px solid #5a5a5a; color: #ccc; font: 8px/14px "Liberation Sans", sans-serif; }
    .tab { display: flex; align-items: center; gap: 7px; height: 100%; width: 50px; padding-left: 6px; background: #545254; border-right: 1px solid #111; border-radius: 4px 0 0 4px; }
    .console .end { margin-left: auto; padding-right: 8px; }
  `];
  render() {
    return html`
      <window-chrome></window-chrome>
      <control-bar></control-bar>
      <main class="work">
        <aside class="dock left">
          <button class="top" aria-label="Expand inspector">${glyph("fastright", 7)}</button>
          <button class="sel">Clip</button><button>Trk</button><button>PC</button>
          <span class="side">INSPECTOR</span>
        </aside>
        <track-view></track-view>
        <aside class="dock right">
          <button class="top" aria-label="Expand browser">${glyph("fastleft", 7)}</button>
          <div class="icons">${["folder", "plug", "note", "help"].map((i) => glyph(i, 9))}</div>
          <span class="side">BROWSER | HELP MODULE | SYNTH RACK</span>
        </aside>
      </main>
      <footer class="console">
        <button class="tab">Console ${glyph("tabclose", 6)}</button>
        <span class="end">${glyph("peak", 6)}</span>
      </footer>
      <task-bar></task-bar>`;
  }
}
